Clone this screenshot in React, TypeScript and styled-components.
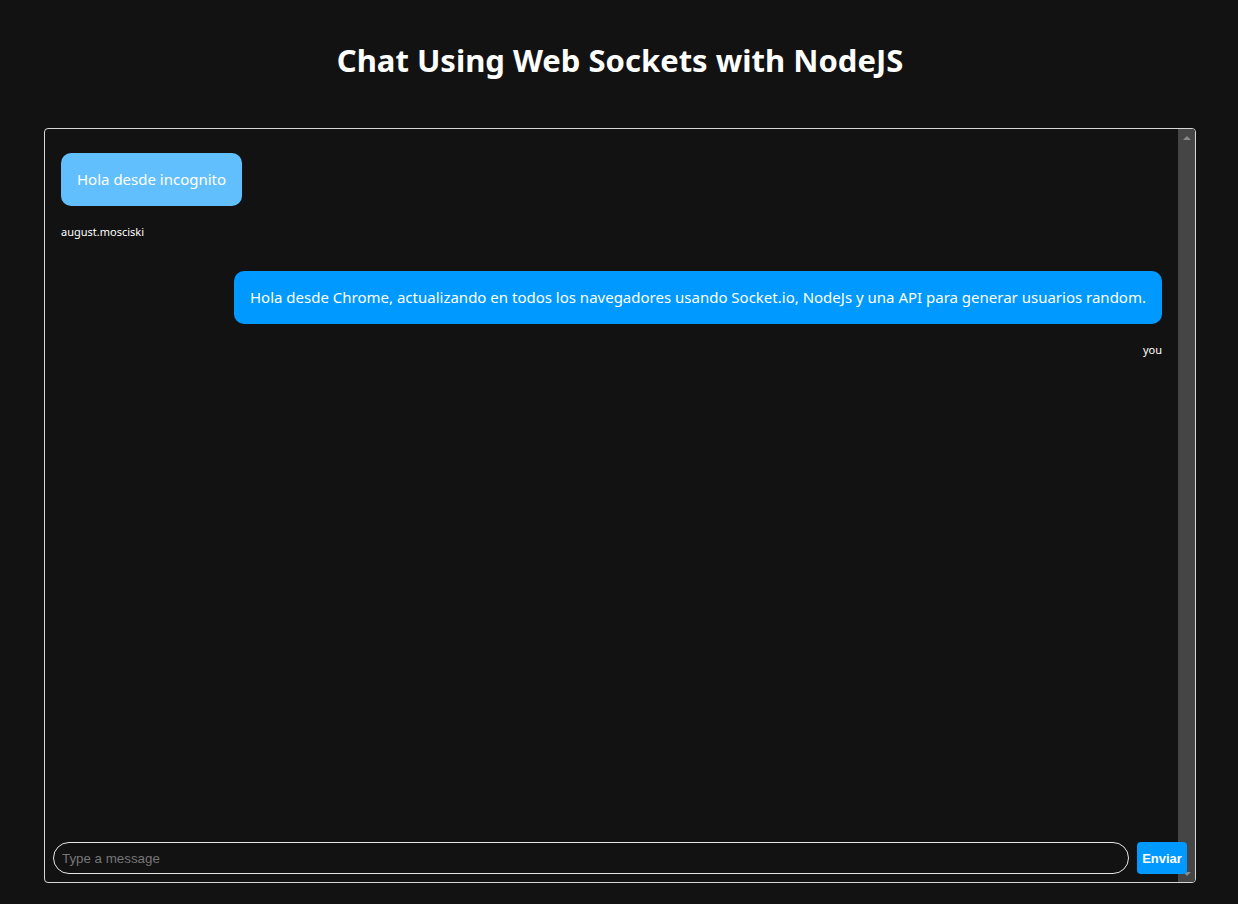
import React from "react";
import styled, { createGlobalStyle } from "styled-components";

const GlobalStyle = createGlobalStyle`
  html, body {
    margin: 0;
    padding: 0;
    background: #121212;
  }
  body {
    font-family: "Noto Sans", "Open Sans", sans-serif;
    color: #ffffff;
  }
`;

const Page = styled.div`
  display: flex;
  flex-direction: column;
  height: 904px;
  box-sizing: border-box;
  padding: 38px 42px 21px 44px;
`;

const Title = styled.h1`
  margin: 0;
  text-align: center;
  font-size: 31px;
  line-height: 44px;
  font-weight: 700;
  color: #ffffff;
`;

const ChatBox = styled.section`
  margin-top: 46px;
  flex: 1;
  min-height: 0;
  display: grid;
  grid-template-columns: 1fr 17px;
  grid-template-rows: 1fr auto;
  border: 1px solid #d6d6d6;
  border-radius: 4px;
  overflow: hidden;
`;

const Messages = styled.div`
  grid-column: 1;
  grid-row: 1;
  display: flex;
  flex-direction: column;
  padding: 24px 16px;
  gap: 31px;
`;

const Message = styled.div<{ $mine?: boolean }>`
  display: flex;
  flex-direction: column;
  align-items: ${(p) => (p.$mine ? "flex-end" : "flex-start")};
  gap: 18px;
`;

const Bubble = styled.div<{ $mine?: boolean }>`
  background: ${(p) => (p.$mine ? "#0099ff" : "#62bffe")};
  color: #ffffff;
  font-size: 15px;
  line-height: 21px;
  padding: 16px;
  border-radius: 10px;
`;

const Author = styled.span`
  font-size: 11px;
  line-height: 16px;
  color: #ffffff;
`;

const ScrollTrack = styled.div`
  grid-column: 2;
  grid-row: 1 / 3;
  background: #454545;
  display: flex;
  flex-direction: column;
  justify-content: space-between;
  align-items: center;
  padding: 7px 0 6px;
`;

const Arrow = styled.div<{ $down?: boolean }>`
  width: 0;
  height: 0;
  border-left: 4px solid transparent;
  border-right: 4px solid transparent;
  ${(p) =>
    p.$down
      ? "border-top: 4px solid #8a8a8a;"
      : "border-bottom: 4px solid #8a8a8a;"}
`;

const Form = styled.form`
  grid-column: 1 / 3;
  grid-row: 2;
  z-index: 1;
  display: flex;
  gap: 8px;
  padding: 0 8px 8px 8px;
`;

const Input = styled.input`
  flex: 1;
  height: 32px;
  box-sizing: border-box;
  background: transparent;
  border: 1px solid #e6e6e6;
  border-radius: 16px;
  padding: 0 8px;
  color: #ffffff;
  caret-color: #ffffff;
  font-family: "Liberation Sans", Arial, sans-serif;
  font-size: 13.33px;
  outline: none;
  &::placeholder {
    color: #767676;
  }
`;

const SendButton = styled.button`
  width: 50px;
  height: 32px;
  border: none;
  border-radius: 4px;
  background: #0099ff;
  color: #ffffff;
  font-family: "Liberation Sans", Arial, sans-serif;
  font-weight: 700;
  font-size: 13px;
  padding: 0;
  cursor: pointer;
`;

const messages = [
  { text: "Hola desde incognito", author: "august.mosciski", mine: false },
  {
    text: "Hola desde Chrome, actualizando en todos los navegadores usando Socket.io, NodeJs y una API para generar usuarios random.",
    author: "you",
    mine: true,
  },
];

export default function App() {
  return (
    <>
      <GlobalStyle />
      <Page>
        <Title>Chat Using Web Sockets with NodeJS</Title>
        <ChatBox>
          <Messages>
            {messages.map((m, i) => (
              <Message key={i} $mine={m.mine}>
                <Bubble $mine={m.mine}>{m.text}</Bubble>
                <Author>{m.author}</Author>
              </Message>
            ))}
          </Messages>
          <ScrollTrack>
            <Arrow />
            <Arrow $down />
          </ScrollTrack>
          <Form onSubmit={(e) => e.preventDefault()}>
            <Input placeholder="Type a message" autoFocus />
            <SendButton type="submit">Enviar</SendButton>
          </Form>
        </ChatBox>
      </Page>
    </>
  );
}
